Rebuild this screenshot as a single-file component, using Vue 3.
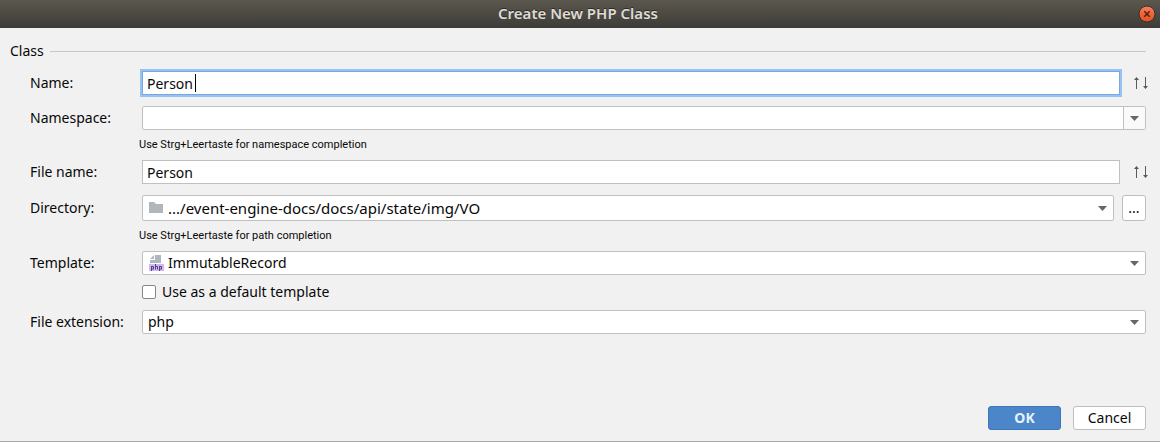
<script setup>
import { ref } from 'vue'

const name = ref('Person')
const namespace = ref('')
const fileName = ref('Person')
const directory = ref('.../event-engine-docs/docs/api/state/img/VO')
const template = ref('ImmutableRecord')
const isDefault = ref(false)
const extension = ref('php')
</script>

<template>
  <form class="dialog" @submit.prevent>
    <header class="titlebar">
      <h1>Create New PHP Class</h1>
      <button type="button" class="close" aria-label="Close">
        <svg width="18" height="18" viewBox="0 0 18 18">
          <defs>
            <linearGradient id="close-fill" x1="0" y1="0" x2="0" y2="1">
              <stop offset="0" stop-color="#f58360" />
              <stop offset="0.5" stop-color="#f0633a" />
              <stop offset="1" stop-color="#e2511f" />
            </linearGradient>
          </defs>
          <circle cx="9" cy="9" r="8" fill="url(#close-fill)" stroke="#33312c" />
          <path d="M6.3 6.3l5.4 5.4M11.7 6.3l-5.4 5.4" stroke="#4a2517" stroke-width="1.5" />
        </svg>
      </button>
    </header>

    <section class="group" role="group" aria-labelledby="class-heading">
      <div class="heading"><span id="class-heading">Class</span></div>

      <div class="row">
        <label for="name">Name:</label>
        <div class="field">
          <div class="focus-wrap">
            <input id="name" v-model="name" class="box text focused" type="text" />
            <span class="caret"></span>
          </div>
          <button type="button" class="history" aria-label="Previous or next kind">
            <svg width="16" height="14" viewBox="0 0 16 14">
              <path d="M3.5 2v11M12.5 1v11" stroke="#5a5a5a" fill="none" />
              <path d="M3.5 1L6 4H1zM12.5 13L10 10h5z" fill="#5a5a5a" />
            </svg>
          </button>
        </div>
      </div>

      <div class="row spaced">
        <label for="namespace">Namespace:</label>
        <div class="field">
          <div class="box combo">
            <input id="namespace" v-model="namespace" type="text" />
            <button type="button" aria-label="Show namespaces">
              <svg width="9" height="5" viewBox="0 0 9 5"><path d="M0 0h9L4.5 5z" fill="#666" /></svg>
            </button>
          </div>
        </div>
      </div>
      <p class="hint">Use Strg+Leertaste for namespace completion</p>

      <div class="row">
        <label for="filename">File name:</label>
        <div class="field">
          <input id="filename" v-model="fileName" class="box text" type="text" />
          <button type="button" class="history" aria-label="Previous or next name">
            <svg width="16" height="14" viewBox="0 0 16 14">
              <path d="M3.5 2v11M12.5 1v11" stroke="#5a5a5a" fill="none" />
              <path d="M3.5 1L6 4H1zM12.5 13L10 10h5z" fill="#5a5a5a" />
            </svg>
          </button>
        </div>
      </div>

      <div class="row spaced">
        <label for="directory">Directory:</label>
        <div class="field">
          <div class="choice">
            <select id="directory" v-model="directory" class="box tall with-icon">
              <option>.../event-engine-docs/docs/api/state/img/VO</option>
            </select>
            <svg class="lead" width="16" height="16" viewBox="0 0 16 16">
              <path d="M1 2h5l2 2h7v9H1z" fill="#afb7bd" />
            </svg>
            <svg class="arrow" width="9" height="5" viewBox="0 0 9 5"><path d="M0 0h9L4.5 5z" fill="#666" /></svg>
          </div>
          <button type="button" class="browse" aria-label="Browse">...</button>
        </div>
      </div>
      <p class="hint">Use Strg+Leertaste for path completion</p>

      <div class="row">
        <label for="template">Template:</label>
        <div class="field">
          <div class="choice">
            <select id="template" v-model="template" class="box with-icon">
              <option>ImmutableRecord</option>
            </select>
            <svg class="lead" width="16" height="16" viewBox="0 0 16 16">
              <path d="M7 0h6v8H2V5h5z" fill="#afb7bd" />
              <path d="M6 0v4H2z" fill="#afb7bd" />
              <path d="M1 9h15v7H1z" fill="#d0b8f5" />
              <path
                d="M3.5 16v-5M3.500 11.500h2v2.500h-2M7.500 9v5.500M7.500 11.500h2v3M11.500 16v-5M11.500 11.500h2v2.500h-2"
                fill="none"
                stroke="#57407c"
              />
            </svg>
            <svg class="arrow" width="9" height="5" viewBox="0 0 9 5"><path d="M0 0h9L4.5 5z" fill="#666" /></svg>
          </div>
        </div>
      </div>

      <div class="check">
        <input id="default" v-model="isDefault" type="checkbox" />
        <label for="default">Use as a default template</label>
      </div>

      <div class="row">
        <label for="extension">File extension:</label>
        <div class="field">
          <div class="choice">
            <select id="extension" v-model="extension" class="box">
              <option>php</option>
            </select>
            <svg class="arrow" width="9" height="5" viewBox="0 0 9 5"><path d="M0 0h9L4.5 5z" fill="#666" /></svg>
          </div>
        </div>
      </div>
    </section>

    <footer class="actions">
      <button type="submit" class="action primary">OK</button>
      <button type="button" class="action">Cancel</button>
    </footer>
  </form>
</template>

<style>
body {
  background: #f1f1f1;
}
</style>

<style scoped>
.dialog,
.dialog * {
  box-sizing: border-box;
}
.dialog {
  display: flex;
  flex-direction: column;
  min-height: 100vh;
  background: #f1f1f1;
  border-bottom: 1px solid #aaa;
  color: #080808;
  font: 14px/20px "Noto Sans", "Open Sans", sans-serif;
}
.dialog input,
.dialog select,
.dialog button {
  margin: 0;
  font: inherit;
  color: inherit;
}
.titlebar {
  display: flex;
  align-items: center;
  height: 28px;
  padding: 0 4px 0 18px;
  background: linear-gradient(#5b574e, #3d3c37);
}
.titlebar h1 {
  flex: 1;
  margin: 0;
  padding-bottom: 2px;
  text-align: center;
  font-size: 15px;
  line-height: 20px;
  font-weight: 600;
  color: #dfdbd2;
  text-shadow: 0 -1px #2c2b28;
}
.dialog .close {
  display: flex;
  padding: 0;
  border: 0;
  background: none;
}
.group {
  padding: 13px 14px 0 30px;
}
.heading {
  display: flex;
  align-items: center;
  gap: 6px;
  margin: 0 0 10px -20px;
}
.heading::after {
  content: "";
  flex: 1;
  height: 1px;
  background: #c6c6c6;
}
.row {
  display: grid;
  grid-template-columns: 112px 1fr;
  align-items: center;
}
.row.spaced {
  margin-top: 11px;
}
.field {
  display: flex;
  min-width: 0;
}
.dialog .box {
  flex: 1;
  width: 100%;
  min-width: 0;
  height: 24px;
  padding: 0 5px;
  border: 1px solid #c0c0c0;
  border-radius: 2px;
  background: #fff;
  outline: none;
}
.dialog .box.text {
  padding: 1px 4px 0;
  border-radius: 0;
}
.dialog .box.tall {
  height: 26px;
  font-size: 15px;
}
.dialog .box.with-icon {
  padding-left: 25px;
}
.focus-wrap {
  position: relative;
  display: flex;
  flex: 1;
}
.dialog .box.focused {
  border-color: #7ba7dc;
  box-shadow: 0 0 0 2px #97c3f3;
}
.caret {
  position: absolute;
  left: 53px;
  top: 3px;
  width: 1px;
  height: 18px;
  background: #000;
}
.dialog .history {
  display: flex;
  align-items: center;
  justify-content: center;
  width: 40px;
  margin-right: -14px;
  padding: 0 0 0 2px;
  border: 0;
  background: none;
}
.dialog .box.combo {
  display: flex;
  padding: 0;
}
.combo input {
  flex: 1;
  min-width: 0;
  padding: 0 5px;
  border: 0;
  background: none;
  outline: none;
}
.dialog .combo button {
  display: flex;
  align-items: center;
  justify-content: center;
  width: 22px;
  padding: 0;
  border: 0;
  border-left: 1px solid #c0c0c0;
  background: #fafafa;
}
.choice {
  position: relative;
  display: flex;
  flex: 1;
  min-width: 0;
}
.choice select {
  appearance: none;
}
.lead,
.arrow {
  position: absolute;
  top: 0;
  bottom: 0;
  margin: auto 0;
  pointer-events: none;
}
.lead {
  left: 6px;
}
.arrow {
  right: 7px;
}
.dialog .browse {
  width: 24px;
  height: 26px;
  margin-left: 8px;
  padding: 0;
  border: 1px solid #bdbdbd;
  border-radius: 3px;
  background: #fff;
}
.hint {
  margin: 7px 0 7px 109px;
  font-family: Roboto, "Noto Sans", sans-serif;
  font-size: 11px;
  line-height: 16px;
}
.check {
  display: flex;
  align-items: center;
  gap: 6px;
  margin: 7px 0 8px 112px;
}
.dialog .check input {
  appearance: none;
  width: 14px;
  height: 14px;
  border: 1px solid #868686;
  border-radius: 2px;
  background: #fff;
}
.actions {
  display: flex;
  justify-content: flex-end;
  gap: 12px;
  margin-top: auto;
  padding: 12px 14px 11px;
}
.dialog .action {
  width: 73px;
  height: 24px;
  padding: 0;
  border: 1px solid #bdbdbd;
  border-radius: 3px;
  background: #fff;
  line-height: 20px;
}
.dialog .action.primary {
  border-color: #3f75b5;
  background: #4a86c9;
  color: #e8f1fa;
  font-weight: 700;
}
</style>
